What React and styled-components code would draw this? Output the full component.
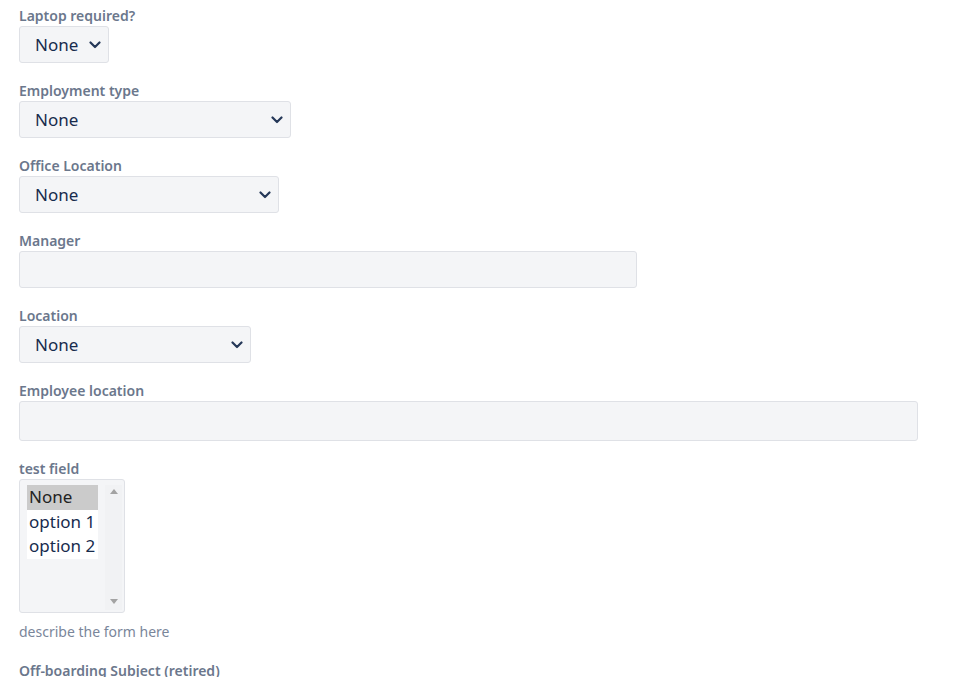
import React from "react";
import styled, { createGlobalStyle } from "styled-components";

const Global = createGlobalStyle`
  html, body { margin: 0; padding: 0; background: #fff; }
  body { font-family: "Segoe UI", "Noto Sans", "Open Sans", sans-serif; }
`;

const Form = styled.div`
  display: flex;
  flex-direction: column;
  padding: 3px 19px 0;
`;

const Field = styled.div`
  display: flex;
  flex-direction: column;
  margin-bottom: ${(p) => p.$mb ?? 15}px;
`;

const Label = styled.label`
  font-size: 14px;
  font-weight: 600;
  line-height: 20px;
  color: #6b778c;
  margin-top: 3px;
  white-space: nowrap;
`;

const SelectBox = styled.div`
  box-sizing: border-box;
  width: ${(p) => p.$w}px;
  height: 37px;
  display: flex;
  align-items: center;
  justify-content: space-between;
  padding: 0 7px 0 15px;
  background: #f4f5f7;
  border: 1px solid #dfe1e6;
  border-radius: 3px;
  font-size: 17px;
  color: #172b4d;
`;

const Input = styled.div`
  box-sizing: border-box;
  width: ${(p) => p.$w}px;
  height: ${(p) => p.$h ?? 37}px;
  background: #f4f5f7;
  border: 1px solid #dfe1e6;
  border-radius: 3px;
`;

const ListBox = styled.div`
  box-sizing: border-box;
  width: 106px;
  height: 134px;
  display: flex;
  background: #f4f5f7;
  border: 1px solid #dfe1e6;
  border-radius: 3px;
  padding: 5px 2px 2px 7px;
`;

const Options = styled.div`
  width: 71px;
  align-self: flex-start;
  background: #fff;
  display: flex;
  flex-direction: column;
  overflow: hidden;
`;

const Option = styled.div`
  font-size: 17px;
  line-height: 24.5px;
  padding-left: 2px;
  white-space: nowrap;
  color: ${(p) => (p.$selected ? "#222" : "#172b4d")};
  background: ${(p) => (p.$selected ? "#cbcbcb" : "transparent")};
`;

const Scrollbar = styled.div`
  margin-left: auto;
  width: 17px;
  display: flex;
  flex-direction: column;
  justify-content: space-between;
  align-items: center;
  padding: 4px 0 6px;
  background: #f1f2f4;
`;

const Help = styled.div`
  font-size: 14px;
  line-height: 20px;
  color: #7a869a;
  margin-top: 9px;
  margin-bottom: 16px;
`;

const Chevron = () => (
  <svg width="12" height="8" viewBox="0 0 12 8" fill="none">
    <path d="M1.5 1.5 L6 6 L10.5 1.5" stroke="#253858" strokeWidth="2.2" strokeLinecap="round" strokeLinejoin="round" />
  </svg>
);

const Tri = ({ up }) => (
  <svg width="8" height="5" viewBox="0 0 8 5">
    <path d={up ? "M0 5 L4 0 L8 5 Z" : "M0 0 L4 5 L8 0 Z"} fill="#a3a3a3" />
  </svg>
);

const Select = ({ w }) => (
  <SelectBox $w={w}>
    <span>None</span>
    <Chevron />
  </SelectBox>
);

export default function App() {
  return (
    <>
      <Global />
      <Form>
        <Field>
          <Label>Laptop required?</Label>
          <Select w={90} />
        </Field>
        <Field>
          <Label>Employment type</Label>
          <Select w={272} />
        </Field>
        <Field>
          <Label>Office Location</Label>
          <Select w={260} />
        </Field>
        <Field>
          <Label>Manager</Label>
          <Input $w={618} />
        </Field>
        <Field>
          <Label>Location</Label>
          <Select w={232} />
        </Field>
        <Field>
          <Label>Employee location</Label>
          <Input $w={899} $h={40} />
        </Field>
        <Field $mb={0}>
          <Label>test field</Label>
          <ListBox>
            <Options>
              <Option $selected>None</Option>
              <Option>option 1</Option>
              <Option>option 2</Option>
            </Options>
            <Scrollbar>
              <Tri up />
              <Tri />
            </Scrollbar>
          </ListBox>
          <Help>describe the form here</Help>
        </Field>
        <Field>
          <Label>Off-boarding Subject (retired)</Label>
        </Field>
      </Form>
    </>
  );
}
